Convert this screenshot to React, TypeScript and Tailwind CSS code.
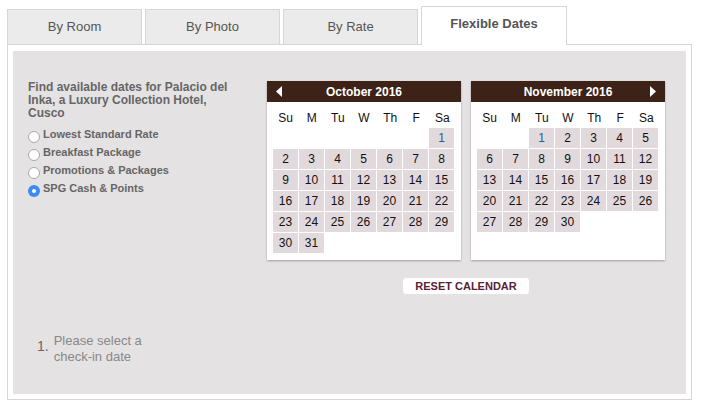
import React from 'react';

type Month = { name: string; offset: number; days: number; prev?: boolean; next?: boolean };

const months: Month[] = [
  { name: 'October 2016', offset: 6, days: 31, prev: true },
  { name: 'November 2016', offset: 2, days: 30, next: true },
];

const weekdays = ['Su', 'M', 'Tu', 'W', 'Th', 'F', 'Sa'];

const rates = [
  { label: 'Lowest Standard Rate', checked: false },
  { label: 'Breakfast Package', checked: false },
  { label: 'Promotions & Packages', checked: false },
  { label: 'SPG Cash & Points', checked: true },
];

const tabs = ['By Room', 'By Photo', 'By Rate'];

function Calendar({ month }: { month: Month }) {
  const cells: (number | null)[] = [];
  for (let i = 0; i < month.offset; i++) cells.push(null);
  for (let d = 1; d <= month.days; d++) cells.push(d);

  return (
    <div className="w-[194px] bg-white shadow-[0_1px_2px_rgba(0,0,0,0.3)] pb-[7px]">
      {/* Month header */}
      <div className="relative h-[21px] bg-[#3d2217] flex items-center justify-center">
        {month.prev && (
          <svg className="absolute left-[9px] top-[5px]" width="6" height="11" viewBox="0 0 6 11">
            <path d="M6 0 L0 5.5 L6 11 Z" fill="#fff" />
          </svg>
        )}
        <span className="text-[12px] font-bold text-white leading-none">{month.name}</span>
        {month.next && (
          <svg className="absolute right-[9px] top-[5px]" width="6" height="11" viewBox="0 0 6 11">
            <path d="M0 0 L6 5.5 L0 11 Z" fill="#fff" />
          </svg>
        )}
      </div>

      {/* Weekday labels */}
      <div className="grid grid-cols-7 gap-x-px px-[6px] pt-[7px]">
        {weekdays.map(w => (
          <div key={w} className="h-[19px] leading-[19px] text-center text-[12px] text-[#111]">
            {w}
          </div>
        ))}
      </div>

      {/* Days */}
      <div className="grid grid-cols-[repeat(7,25px)] gap-px px-[6px]">
        {cells.map((d, i) =>
          d === null ? (
            <div key={`e${i}`} className="h-[20px]" />
          ) : (
            <div
              key={d}
              className={`h-[20px] leading-[20px] text-center text-[12px] bg-[#e2d9dc] ${
                d === 1 ? 'text-[#1f5c92]' : 'text-[#111]'
              }`}
            >
              {d}
            </div>
          )
        )}
      </div>
    </div>
  );
}

function Radio({ checked }: { checked: boolean }) {
  return checked ? (
    <span className="mt-[4px] w-[12px] h-[12px] rounded-full bg-[#3a8cf4] flex items-center justify-center shrink-0">
      <span className="w-[4px] h-[4px] rounded-full bg-white" />
    </span>
  ) : (
    <span className="mt-[4px] w-[12px] h-[12px] rounded-full bg-white border border-[#a9a9a9] shrink-0" />
  );
}

export default function App() {
  return (
    <div className="w-[704px] h-[407px] bg-white pt-[6px] pl-[7px] font-['Liberation_Sans',Arial,sans-serif]">
      {/* Tabs */}
      <div className="flex items-end gap-[3px] h-[39px]">
        {tabs.map(t => (
          <div
            key={t}
            className="w-[135px] h-[36px] bg-[#ebebeb] border border-[#d6d6d6] text-center text-[13px] text-[#555] pt-[9px] leading-[16px]"
          >
            {t}
          </div>
        ))}
        <div className="relative z-10 w-[146px] h-[39px] bg-white border border-b-0 border-[#d6d6d6] text-center text-[13px] font-bold text-[#555] pt-[9px] leading-[16px]">
          Flexible Dates
        </div>
      </div>

      {/* Content box */}
      <div className="-mt-px w-[685px] border border-[#d6d6d6] bg-white pt-[6px] px-[5px] pb-[5px]">
        <div className="h-[343px] bg-[#e4e2e3] flex pl-[15px] pt-[30px]">
          {/* Left column */}
          <div className="w-[239px] flex flex-col">
            <p className="w-[210px] text-[12px] leading-[13px] font-bold text-[#666]">
              Find available dates for Palacio del Inka, a Luxury Collection Hotel, Cusco
            </p>
            <div className="mt-[7px] flex flex-col">
              {rates.map(r => (
                <label key={r.label} className="flex items-start gap-[3px] h-[18px]">
                  <Radio checked={r.checked} />
                  <span className="text-[11px] leading-[14px] font-bold text-[#666]">{r.label}</span>
                </label>
              ))}
            </div>

            <div className="mt-[134px] ml-[9px] flex items-start gap-[5px]">
              <span className="text-[14px] leading-[16px] mt-[5px] text-[#666]">1.</span>
              <span className="text-[13px] leading-[16px] text-[#888]">
                Please select a<br />check-in date
              </span>
            </div>
          </div>

          {/* Calendars */}
          <div className="flex flex-col items-center">
            <div className="flex items-stretch gap-[10px]">
              {months.map(m => (
                <Calendar key={m.name} month={m} />
              ))}
            </div>
            <button
              type="button"
              className="mt-[18px] w-[126px] h-[16px] bg-white rounded-[3px] text-[11px] font-bold leading-[16px] text-[#5b2236]"
            >
              RESET CALENDAR
            </button>
          </div>
        </div>
      </div>
    </div>
  );
}
